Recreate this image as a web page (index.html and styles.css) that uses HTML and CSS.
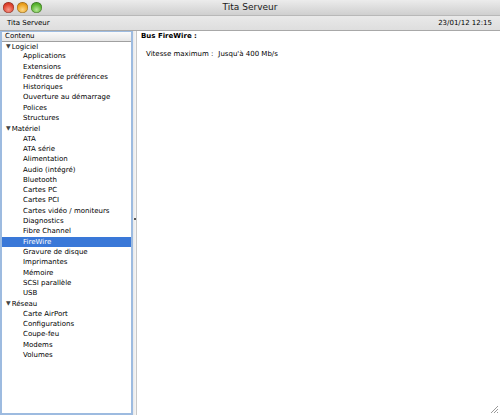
FILE: index.html
```html
<!DOCTYPE html>
<html>
<head>
<meta charset="utf-8">
<link rel="stylesheet" href="styles.css">
</head>
<body>
<div class="window">
  <div class="titlebar">
    <div class="lights">
      <span class="light red"></span><span class="light yellow"></span><span class="light green"></span>
    </div>
    <div class="title">Tita Serveur</div>
  </div>
  <div class="infobar">
    <span>Tita Serveur</span>
    <span>23/01/12 12:15</span>
  </div>
  <div class="main">
    <div class="sidebar">
      <div class="side-head">Contenu</div>
      <ul class="tree">
        <li class="group"><span class="tri">▼</span>Logiciel</li>
        <li>Applications</li>
        <li>Extensions</li>
        <li>Fenêtres de préférences</li>
        <li>Historiques</li>
        <li>Ouverture au démarrage</li>
        <li>Polices</li>
        <li>Structures</li>
        <li class="group"><span class="tri">▼</span>Matériel</li>
        <li>ATA</li>
        <li>ATA série</li>
        <li>Alimentation</li>
        <li>Audio (intégré)</li>
        <li>Bluetooth</li>
        <li>Cartes PC</li>
        <li>Cartes PCI</li>
        <li>Cartes vidéo / moniteurs</li>
        <li>Diagnostics</li>
        <li>Fibre Channel</li>
        <li class="sel">FireWire</li>
        <li>Gravure de disque</li>
        <li>Imprimantes</li>
        <li>Mémoire</li>
        <li>SCSI parallèle</li>
        <li>USB</li>
        <li class="group"><span class="tri">▼</span>Réseau</li>
        <li>Carte AirPort</li>
        <li>Configurations</li>
        <li>Coupe-feu</li>
        <li>Modems</li>
        <li>Volumes</li>
      </ul>
    </div>
    <div class="splitter"><span class="dot"></span></div>
    <div class="content">
      <div class="content-head">Bus FireWire :</div>
      <div class="kv"><span class="k">Vitesse maximum :</span><span class="v">Jusqu'à 400 Mb/s</span></div>
    </div>
  </div>
  <svg class="grip" width="10" height="10" viewBox="0 0 10 10">
    <path d="M9 2 L2 9 M9 5 L5 9 M9 8 L8 9" stroke="#9a9a9a" stroke-width="1"/>
  </svg>
</div>
</body>
</html>
```

FILE: styles.css
```css
html, body {
  margin: 0;
  padding: 0;
}
body {
  width: 500px;
  height: 415px;
  overflow: hidden;
  font-family: "DejaVu Sans", Verdana, sans-serif;
  font-size: 7px;
  color: #000;
}
.window {
  position: relative;
  width: 500px;
  height: 415px;
  display: flex;
  flex-direction: column;
  background: #fff;
}
.titlebar {
  height: 15px;
  flex: none;
  background: linear-gradient(#ececec, #cfcfcf);
  display: flex;
  align-items: center;
  position: relative;
}
.lights {
  display: flex;
  gap: 3px;
  padding-left: 3px;
  position: absolute;
  left: 0;
  top: 2px;
}
.light {
  width: 11px;
  height: 11px;
  border-radius: 50%;
  box-shadow: inset 0 0 0 0.5px rgba(0,0,0,0.35);
}
.red { background: radial-gradient(circle at 50% 70%, #f79a8d 0%, #e0442f 55%, #a5251a 100%); }
.yellow { background: radial-gradient(circle at 50% 70%, #fbd98a 0%, #eda320 55%, #b46d0c 100%); }
.green { background: radial-gradient(circle at 50% 70%, #b8e89a 0%, #5cb631 55%, #2f7a15 100%); }
.title {
  flex: 1;
  text-align: center;
  font-size: 9px;
  color: #1a1a1a;
  line-height: 15px;
}
.infobar {
  height: 14px;
  flex: none;
  display: flex;
  justify-content: space-between;
  align-items: center;
  padding: 0 8px 0 7px;
  background: linear-gradient(#e9e9e9, #dedede);
  border-top: 1px solid #b8b8b8;
  border-bottom: 1px solid #a8a8a8;
}
.main {
  flex: 1;
  display: flex;
  min-height: 0;
}
.sidebar {
  width: 129px;
  flex: none;
  border: 2px solid #9dbbe0;
  border-top-width: 1px;
  background: #fff;
}
.side-head {
  height: 9px;
  line-height: 9px;
  padding-left: 3px;
  border-bottom: 1px solid #a0a0a0;
  background: linear-gradient(#fafafa, #e6e6e6);
}
.tree {
  list-style: none;
  margin: -1px 0 0;
  padding: 0;
}
.tree li {
  height: 10.3px;
  line-height: 10.3px;
  padding-left: 21px;
  white-space: nowrap;
}
.tree li.group {
  padding-left: 4px;
}
.tri {
  font-size: 6px;
  color: #444;
  margin-right: 1px;
  vertical-align: 0.5px;
}
.tree li.sel {
  background: #3a78d8;
  color: #fff;
}
.splitter {
  width: 3px;
  flex: none;
  background: linear-gradient(to right, #e8e8e8, #f6f6f6);
  border-right: 1px solid #c8c8c8;
  position: relative;
}
.dot {
  position: absolute;
  left: 0.5px;
  top: 187px;
  width: 2px;
  height: 2px;
  background: #555;
}
.content {
  flex: 1;
  padding: 1px 4px;
}
.content-head {
  font-weight: bold;
  line-height: 9px;
}
.kv {
  margin-top: 8px;
  padding-left: 5px;
  display: flex;
  gap: 5px;
  line-height: 10px;
}
.grip {
  position: absolute;
  right: 1px;
  bottom: 1px;
}
```
